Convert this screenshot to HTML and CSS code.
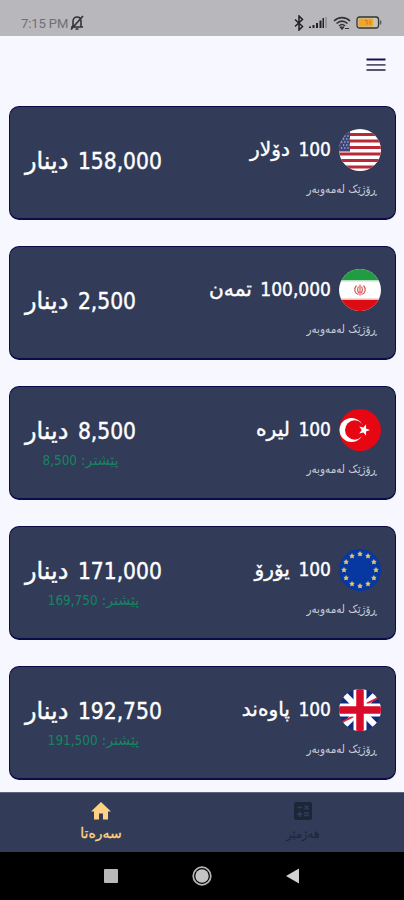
FILE: index.html
```
<!DOCTYPE html>
<html lang="ckb" dir="rtl">
<head>
    <meta charset="UTF-8">
    <meta name="viewport" content="width=device-width, initial-scale=1.0">
    <title>دینار</title>
    <link rel="stylesheet" href="styles.css">
</head>
<body>
    <!-- Status bar -->
    <div class="status" dir="ltr">
        <span class="time">7:15 PM</span>
        <svg class="bell" width="14" height="16" viewBox="0 0 14 16" fill="none" stroke="#333" stroke-width="1.600">
            <path d="M3 11.500V6.500C3 3.500 5 2 7 2s4 1.500 4 4.500v5M1 12h12M5.500 14h3M1 14.500L13 1"/>
        </svg>
        <svg class="bluetooth" width="10" height="16" viewBox="0 0 10 16" fill="none" stroke="#222" stroke-width="1.500">
            <path d="M1 4.500l7.500 7L5 15V1l3.500 3.500L1 11.500"/>
        </svg>
        <svg class="signal" width="18" height="12" viewBox="0 0 18 12" fill="#222">
            <path d="M0 9.500h2V11H0zM3.500 8h2v3h-2zM7 6h2v5H7zM10.500 3.500h2V11h-2zM13.500 1h1.500v10h-1.500z"/>
            <path d="M16.500 0h1v11h-1z" fill="#777"/>
        </svg>
        <svg class="wifi" width="18" height="14" viewBox="0 0 18 14" fill="none" stroke="#333" stroke-width="1.600">
            <path d="M1 5C5.500 .5 12.500 .5 17 5M3.500 7.500c3.500-3 7.500-3 11 0M6 10c2-2 4-2 6 0"/>
            <path d="M7 11h4l-2 2.500zM12 12.500h4" fill="#333" stroke-width="1"/>
        </svg>
        <svg class="battery" width="26" height="14" viewBox="0 0 26 14">
            <rect x="1" y="1" width="21.500" height="11" rx="2.500" fill="#c9c4b8" stroke="#333" stroke-width="1.300"/>
            <rect x="2.500" y="2.500" width="14.500" height="8" rx="1" fill="#f0a52c"/>
            <path d="M9 4.500h2v4M14 4.500v4" fill="none" stroke="#c57a19"/>
            <path d="M24.500 4.500v4" stroke="#555" stroke-width="1.500"/>
        </svg>
    </div>

    <header class="appbar">
        <svg width="20" height="14" viewBox="0 0 20 14">
            <path d="M.5 1.500h19" stroke="#15134a" stroke-width="2"/>
            <path d="M.5 6.800h19M.5 12h19" stroke="#56546e" stroke-width="1.800"/>
        </svg>
    </header>

    <!-- Currency list -->
    <main class="rates">
        <section class="card">
            <div class="currency">
                <div class="name">
                    <svg class="flag" viewBox="0 0 42 42">
                        <rect width="42" height="42" fill="#fff"/>
                        <path d="M0 5.500h42M0 12h42M0 18.500h42M0 25h42M0 31.500h42M0 38h42" stroke="#b92a38" stroke-width="3.200"/>
                        <rect width="11" height="22.500" fill="#3c4678"/>
                        <path d="M2 7h9M4 10h7M2 13h9M4 16h7M2 19h9" stroke="#e3e5ef" stroke-width="1.200" stroke-dasharray="1.200 2"/>
                    </svg>
                    <span>100 <span class="unit">دۆلار</span></span>
                </div>
                <p class="ago">ڕۆژێک لەمەوبەر</p>
            </div>
            <div class="price">
                <strong>158,000 <span class="unit">دینار</span></strong>
            </div>
        </section>

        <section class="card">
            <div class="currency">
                <div class="name">
                    <svg class="flag" viewBox="0 0 42 42">
                        <rect width="42" height="42" fill="#fff"/>
                        <rect width="42" height="11" fill="#219c43"/>
                        <rect y="31" width="42" height="11" fill="#db0d12"/>
                        <path d="M0 11.800h42" stroke="#b7dfc0" stroke-width="1.600"/>
                        <path d="M0 30.200h42" stroke="#efb4b4" stroke-width="1.600"/>
                        <path d="M17.500 16.500c-3 3-2 8 2 9M24.500 16.500c3 3 2 8-2 9M19.500 17.500c-1.500 3-1 5 .5 6.500M22.500 17.500c1.500 3 1 5-.5 6.500M21 15.500v11" fill="none" stroke="#d0504d" stroke-width="1.100"/>
                    </svg>
                    <span>100,000 <span class="unit">تمەن</span></span>
                </div>
                <p class="ago">ڕۆژێک لەمەوبەر</p>
            </div>
            <div class="price">
                <strong>2,500 <span class="unit">دینار</span></strong>
            </div>
        </section>

        <section class="card">
            <div class="currency">
                <div class="name">
                    <svg class="flag" viewBox="0 0 42 42">
                        <rect width="42" height="42" fill="#e60713"/>
                        <circle cx="12.500" cy="21" r="12" fill="#fff"/>
                        <circle cx="15.700" cy="21" r="9.700" fill="#e60713"/>
                        <path d="M31 21l-4 1.500.1 4.300-2.700-3.400-4.100 1.200 2.400-3.600-2.400-3.600 4.100 1.200 2.700-3.400-.1 4.300z" fill="#fff"/>
                    </svg>
                    <span>100 <span class="unit">لیرە</span></span>
                </div>
                <p class="ago">ڕۆژێک لەمەوبەر</p>
            </div>
            <div class="price">
                <strong>8,500 <span class="unit">دینار</span></strong>
                <small><span class="unit">پێشتر:</span> 8,500</small>
            </div>
        </section>

        <section class="card">
            <div class="currency">
                <div class="name">
                    <svg class="flag" viewBox="0 0 42 42">
                        <defs>
                            <path id="star" d="M0-2.400L.7-.8 2.300-.7 1.100.4 1.500 2 0 1.200-1.500 2-1.100.4-2.300-.7-.7-.8z"/>
                        </defs>
                        <rect width="42" height="42" fill="#0737a0"/>
                        <g fill="#e9cb68" stroke="#e9cb68" stroke-width=".6">
                            <use href="#star" x="21" y="5"/>
                            <use href="#star" x="29" y="7.100"/>
                            <use href="#star" x="34.900" y="13"/>
                            <use href="#star" x="37" y="21"/>
                            <use href="#star" x="34.900" y="29"/>
                            <use href="#star" x="29" y="34.900"/>
                            <use href="#star" x="21" y="37"/>
                            <use href="#star" x="13" y="34.900"/>
                            <use href="#star" x="7.100" y="29"/>
                            <use href="#star" x="5" y="21"/>
                            <use href="#star" x="7.100" y="13"/>
                            <use href="#star" x="13" y="7.100"/>
                        </g>
                    </svg>
                    <span>100 <span class="unit">یۆرۆ</span></span>
                </div>
                <p class="ago">ڕۆژێک لەمەوبەر</p>
            </div>
            <div class="price">
                <strong>171,000 <span class="unit">دینار</span></strong>
                <small><span class="unit">پێشتر:</span> 169,750</small>
            </div>
        </section>

        <section class="card">
            <div class="currency">
                <div class="name">
                    <svg class="flag" viewBox="0 0 42 42">
                        <rect width="42" height="42" fill="#102b7d"/>
                        <path d="M-1 -1l44 44M-1 43l44-44" stroke="#fff" stroke-width="6"/>
                        <path d="M19 25L-5 37M23 17L47 5" stroke="#d9203a" stroke-width="2"/>
                        <path d="M21 0v42M0 21h42" stroke="#fff" stroke-width="13"/>
                        <path d="M21 0v42M0 21h42" stroke="#d80b2b" stroke-width="7.500"/>
                    </svg>
                    <span>100 <span class="unit">پاوەند</span></span>
                </div>
                <p class="ago">ڕۆژێک لەمەوبەر</p>
            </div>
            <div class="price">
                <strong>192,750 <span class="unit">دینار</span></strong>
                <small><span class="unit">پێشتر:</span> 191,500</small>
            </div>
        </section>
    </main>

    <!-- Bottom tabs -->
    <nav class="tabs">
        <div class="tab">
            <svg width="24" height="24" viewBox="0 0 24 24" fill="#1d2638">
                <path fill-rule="evenodd" d="M5 3h14a2 2 0 0 1 2 2v14a2 2 0 0 1-2 2H5a2 2 0 0 1-2-2V5a2 2 0 0 1 2-2zm1.250 4.720v1.500h5v-1.500zM13 15.750v1.500h5v-1.500zm0-2.500v1.500h5v-1.500zM8 18h1.500v-2h2v-1.500h-2v-2H8v2H6V16h2zm6.090-7.050l1.410-1.410 1.410 1.410 1.060-1.060-1.410-1.420 1.410-1.410L16.910 6 15.500 7.410 14.090 6l-1.060 1.060 1.410 1.410-1.410 1.420z"/>
            </svg>
            <span>هەژمێر</span>
        </div>
        <div class="tab active">
            <svg width="24" height="24" viewBox="0 0 24 24" fill="#fdd284">
                <path d="M10 20.500v-6h4v6h5v-8h3L12 3 2 12.500h3v8z"/>
            </svg>
            <span>سەرەتا</span>
        </div>
    </nav>

    <!-- Android buttons -->
    <div class="keys" dir="ltr">
        <svg width="14" height="14" viewBox="0 0 14 14"><rect width="14" height="14" rx="1" fill="#b9b9b9"/></svg>
        <svg width="20" height="20" viewBox="0 0 20 20">
            <circle cx="10" cy="10" r="8.800" fill="none" stroke="#b5b5b5" stroke-width="1.700"/>
            <circle cx="10" cy="10" r="6.700" fill="#c4c4c4"/>
        </svg>
        <svg width="14" height="16" viewBox="0 0 14 16"><path d="M0 8L13 .5v15z" fill="#d0d0d0"/></svg>
    </div>
</body>
</html>
```

FILE: styles.css
```
* {
    margin: 0;
    padding: 0;
    box-sizing: border-box;
}

body {
    height: 900px;
    overflow: hidden;
    display: flex;
    flex-direction: column;
    background-color: #f7f7ff;
    font-family: "DejaVu Sans Condensed", "DejaVu Sans", sans-serif;
    font-stretch: condensed;
    color: #fff;
}

svg {
    display: block;
    flex: none;
}

/* Status bar */
.status {
    height: 36px;
    flex: none;
    display: flex;
    align-items: center;
    padding: 10px 22px 0 21px;
    background-color: #b8b7bb;
}

.time {
    width: 49px;
    font-family: Roboto, sans-serif;
    font-stretch: normal;
    font-size: 13px;
    letter-spacing: -0.1px;
    color: #707073;
    white-space: nowrap;
}

.bluetooth {
    margin-left: auto;
}

.signal {
    margin-left: 5px;
}

.wifi {
    margin-left: 6px;
}

.battery {
    margin-left: 5px;
}

.appbar {
    height: 70px;
    flex: none;
    padding: 22px 18px;
}

/* Cards */
.rates {
    height: 686px;
    flex: none;
    padding: 0 8px 0 9px;
    display: flex;
    flex-direction: column;
    gap: 26px;
}

.card {
    height: 114px;
    flex: none;
    display: flex;
    justify-content: space-between;
    background-color: #323c58;
    border: 1px solid #0b0b45;
    border-bottom-width: 2px;
    border-radius: 10px;
    padding: 0 14px 0 15px;
}

.currency {
    padding-top: 22px;
}

.name {
    display: flex;
    gap: 8px;
    font-size: 19px;
    line-height: 40px;
    word-spacing: 3px;
    white-space: nowrap;
    -webkit-text-stroke: 0.4px #fff;
}

/* Letters are set wider than the digits */
.unit {
    font-family: "DejaVu Sans", sans-serif;
    font-stretch: normal;
    font-size: 1.06em;
}

.flag {
    width: 42px;
    height: 42px;
    border-radius: 50%;
}

.ago {
    margin-top: 9px;
    padding-right: 4px;
    font-size: 11.6px;
    line-height: 18px;
    color: #c7cad6;
}

.price {
    align-self: center;
    display: flex;
    flex-direction: column;
    align-items: center;
    padding-top: 2px;
    white-space: nowrap;
}

.price strong {
    font-size: 22.6px;
    font-weight: normal;
    line-height: 34px;
    word-spacing: 3px;
    -webkit-text-stroke: 0.4px #fff;
}

.price strong:only-child {
    margin-bottom: 5px;
}

.price small {
    font-size: 13.4px;
    line-height: 24px;
    color: #168461;
}

/* Bottom tabs */
.tabs {
    height: 60px;
    flex: none;
    display: flex;
    background-color: #323c58;
    border-top: 1px solid #5e6681;
}

.tab {
    flex: 1;
    display: flex;
    flex-direction: column;
    align-items: center;
    padding-top: 6px;
    font-size: 12.6px;
    line-height: 22px;
    color: #1d2638;
}

.active {
    font-family: "DejaVu Sans", sans-serif;
    font-stretch: normal;
    font-size: 14px;
    line-height: 20px;
    color: #fdd284;
    -webkit-text-stroke: 0.3px #fdd284;
}

.keys {
    height: 48px;
    flex: none;
    display: flex;
    align-items: center;
    justify-content: space-between;
    padding: 0 104px;
    background-color: #000;
}
```
